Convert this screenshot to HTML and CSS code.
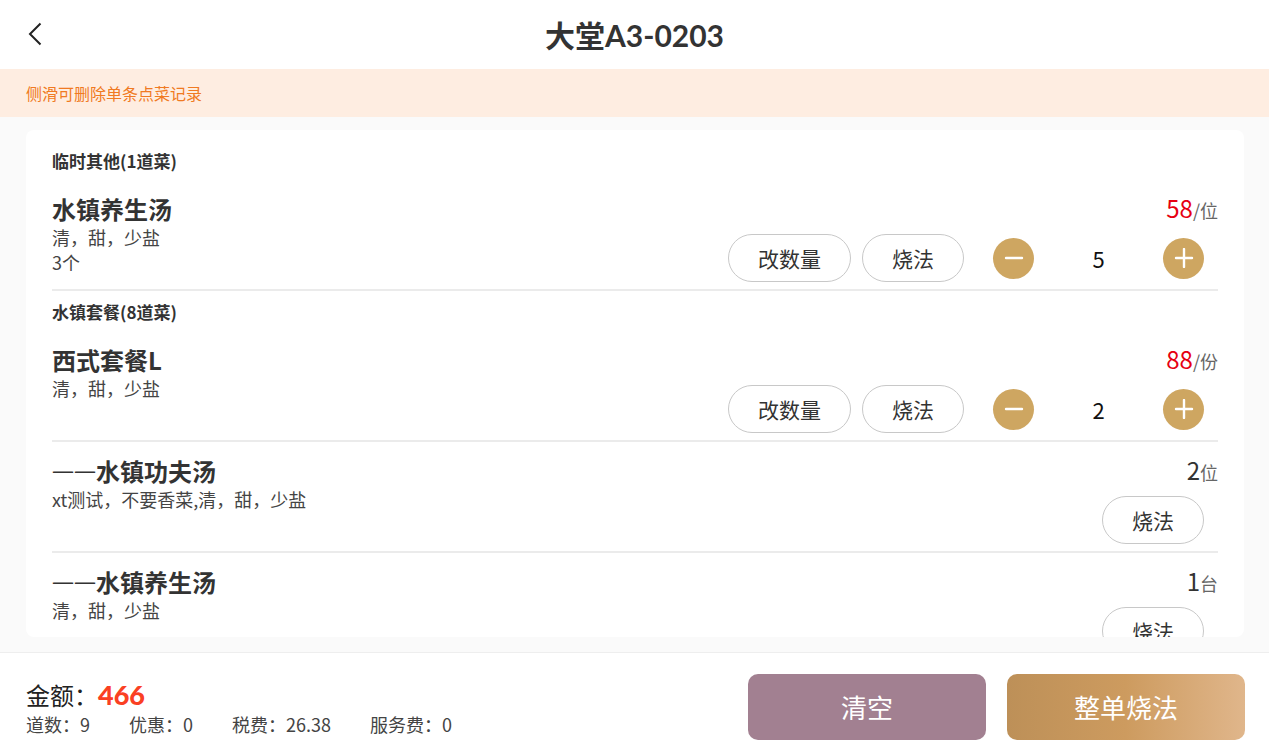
FILE: index.html
```
<!DOCTYPE html>
<html lang="zh-CN">
<head>
    <meta charset="UTF-8">
    <meta name="viewport" content="width=device-width, initial-scale=1.0">
    <title>大堂A3-0203</title>
    <link rel="stylesheet" href="styles.css">
</head>
<body>
    <header class="header">
        <button class="back" type="button" aria-label="返回">
            <svg width="16" height="24" viewBox="0 0 16 24" fill="none" stroke="#222" stroke-width="2">
                <path d="M13.5 1.5L3 12l10.5 10.5"/>
            </svg>
        </button>
        <h1>大堂A3-0203</h1>
    </header>
    <p class="notice">侧滑可删除单条点菜记录</p>

    <main class="main">
        <div class="card">
            <section>
                <h2 class="group-title">临时其他(1道菜)</h2>
                <div class="dish">
                    <div class="info">
                        <h3>水镇养生汤</h3>
                        <p>清，甜，少盐</p>
                        <p>3个</p>
                    </div>
                    <div class="side">
                        <div class="price"><strong>58</strong>/位</div>
                        <div class="actions">
                            <button class="pill" type="button">改数量</button>
                            <button class="pill" type="button">烧法</button>
                            <div class="stepper">
                                <button class="round" type="button" aria-label="减少">
                                    <svg width="20" height="20" viewBox="0 0 20 20" stroke="#fff" stroke-width="2.4" stroke-linecap="round"><path d="M2 10h16"/></svg>
                                </button>
                                <span class="count">5</span>
                                <button class="round" type="button" aria-label="增加">
                                    <svg width="20" height="20" viewBox="0 0 20 20" stroke="#fff" stroke-width="2.4" stroke-linecap="round"><path d="M2 10h16M10 1v18"/></svg>
                                </button>
                            </div>
                        </div>
                    </div>
                </div>
            </section>

            <section>
                <h2 class="group-title">水镇套餐(8道菜)</h2>
                <div class="dish">
                    <div class="info">
                        <h3>西式套餐L</h3>
                        <p>清，甜，少盐</p>
                    </div>
                    <div class="side">
                        <div class="price"><strong>88</strong>/份</div>
                        <div class="actions">
                            <button class="pill" type="button">改数量</button>
                            <button class="pill" type="button">烧法</button>
                            <div class="stepper">
                                <button class="round" type="button" aria-label="减少">
                                    <svg width="20" height="20" viewBox="0 0 20 20" stroke="#fff" stroke-width="2.4" stroke-linecap="round"><path d="M2 10h16"/></svg>
                                </button>
                                <span class="count">2</span>
                                <button class="round" type="button" aria-label="增加">
                                    <svg width="20" height="20" viewBox="0 0 20 20" stroke="#fff" stroke-width="2.4" stroke-linecap="round"><path d="M2 10h16M10 1v18"/></svg>
                                </button>
                            </div>
                        </div>
                    </div>
                </div>
                <div class="dish">
                    <div class="info">
                        <h3><span class="dash">——</span>水镇功夫汤</h3>
                        <p>xt测试，不要香菜,清，甜，少盐</p>
                    </div>
                    <div class="side">
                        <div class="price"><span class="amount">2</span>位</div>
                        <div class="actions">
                            <button class="pill" type="button">烧法</button>
                        </div>
                    </div>
                </div>
                <div class="dish">
                    <div class="info">
                        <h3><span class="dash">——</span>水镇养生汤</h3>
                        <p>清，甜，少盐</p>
                    </div>
                    <div class="side">
                        <div class="price"><span class="amount">1</span>台</div>
                        <div class="actions">
                            <button class="pill" type="button">烧法</button>
                        </div>
                    </div>
                </div>
            </section>
        </div>
    </main>

    <footer class="footer">
        <div class="summary">
            <div class="total">金额：<strong>466</strong></div>
            <div class="details">
                <span>道数：9</span>
                <span>优惠：0</span>
                <span>税费：26.38</span>
                <span>服务费：0</span>
            </div>
        </div>
        <button class="btn clear" type="button">清空</button>
        <button class="btn cook" type="button">整单烧法</button>
    </footer>
</body>
</html>
```
FILE: styles.css
```
* {
    box-sizing: border-box;
    margin: 0;
}

body {
    display: flex;
    flex-direction: column;
    height: 100vh;
    overflow: hidden;
    font-family: 'Noto Sans CJK SC', sans-serif;
    color: #333;
    background: #fff;
}

button {
    font-family: inherit;
    border: none;
    padding: 0;
    cursor: pointer;
}

.header {
    display: grid;
    grid-template-columns: 60px 1fr 60px;
    align-items: center;
    padding: 13px 0 12px;
}

.header h1 {
    font-family: 'Lato', 'Noto Sans CJK SC', sans-serif;
    font-size: 30px;
    line-height: 44px;
    text-align: center;
}

.back {
    display: flex;
    padding: 0 0 2px 27px;
    background: none;
}

.notice {
    padding: 12px 26px;
    font-size: 16px;
    line-height: 24px;
    color: #f07a22;
    background: #feede1;
}

.main {
    flex: 1;
    min-height: 0;
    padding: 13px 25px 15px 26px;
    background: #fafafa;
}

.card {
    height: 100%;
    padding: 10px 26px;
    overflow: hidden;
    background: #fff;
    border-radius: 8px;
}

.group-title {
    padding: 8px 0 6px;
    font-size: 17px;
    line-height: 26px;
}

.dish {
    display: flex;
    justify-content: space-between;
    padding: 13px 0 7px;
    border-bottom: 2px solid #ebebeb;
}

.info h3 {
    font-size: 24px;
    line-height: 32px;
}

.info p {
    font-size: 18px;
    line-height: 25px;
    color: #444;
}

.dash {
    font-family: 'Open Sans', sans-serif;
    font-size: 22px;
    font-weight: 400;
    line-height: 1;
    vertical-align: 3px;
}

.side {
    display: flex;
    flex-direction: column;
    align-items: flex-end;
    gap: 9px;
}

.price {
    height: 32px;
    font-size: 18px;
    line-height: 30px;
    color: #666;
}

.price strong {
    font-size: 24px;
    font-weight: 400;
    color: #e60012;
}

.amount {
    font-size: 24px;
    color: #333;
}

.actions {
    display: flex;
    align-items: center;
    gap: 11px;
    padding-right: 14px;
}

.pill {
    height: 48px;
    padding: 0 29px;
    font-size: 21px;
    color: #333;
    background: #fff;
    border: 1px solid #c8c8c8;
    border-radius: 24px;
}

.stepper {
    display: flex;
    align-items: center;
    margin-left: 18px;
}

.round {
    display: flex;
    align-items: center;
    justify-content: center;
    width: 41px;
    height: 41px;
    background: #cea661;
    border-radius: 50%;
}

.count {
    width: 129px;
    font-size: 22px;
    text-align: center;
    color: #111;
}

.footer {
    display: flex;
    align-items: center;
    gap: 21px;
    padding: 21px 24px 15px 26px;
    border-top: 1px solid #eee;
}

.summary {
    flex: 1;
    padding-top: 2px;
}

.total {
    font-size: 24px;
    line-height: 32px;
    color: #222;
}

.total strong {
    font-family: 'Lato', sans-serif;
    font-size: 27px;
    font-weight: 900;
    color: #fa4023;
}

.details {
    display: flex;
    gap: 39px;
    font-size: 18px;
    line-height: 26px;
    color: #444;
}

.btn {
    width: 238px;
    height: 66px;
    padding-bottom: 2px;
    font-size: 26px;
    color: #fff;
    border-radius: 10px;
}

.clear {
    background: #a28091;
}

.cook {
    background: linear-gradient(90deg, #bd9058, #cd9b5f 50%, #e0b68b);
}
```
